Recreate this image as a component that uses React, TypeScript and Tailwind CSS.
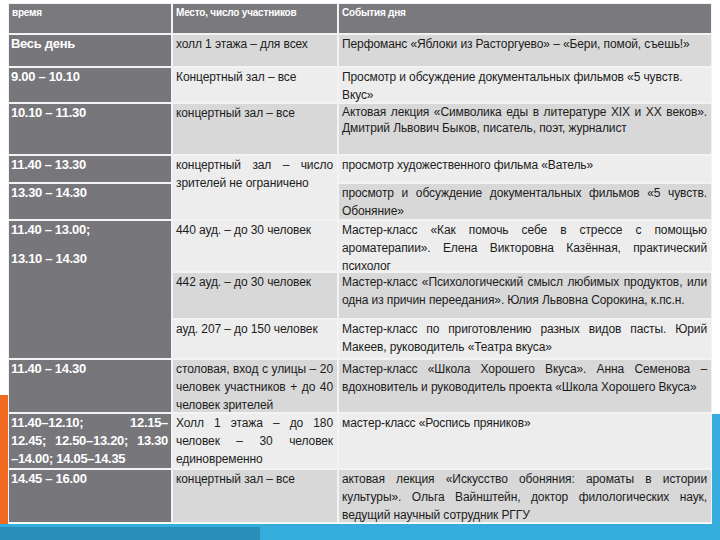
import React from "react";

type Ln = { t: string; j?: boolean };

const L = (t: string, j = false): Ln => ({ t, j });

function Lines({ lines, className = "" }: { lines: Ln[]; className?: string }) {
  return (
    <div className={className}>
      {lines.map((l, i) => (
        <div key={i} className={l.j ? "whitespace-nowrap [text-align-last:justify]" : "whitespace-nowrap"}>
          {l.t}
        </div>
      ))}
    </div>
  );
}

const timeCell = "bg-[#77767b] text-white font-bold text-[13px] leading-[18px] pl-[2px] tracking-[-0.3px]";
const light = "bg-[#ededed] text-[#1c1c1c] text-[12px] leading-[18px] px-[3px] tracking-[-0.1px]";
const dark = "bg-[#d8d8d8] text-[#1c1c1c] text-[12px] leading-[18px] px-[3px] tracking-[-0.1px]";
const head = "bg-[#7a797d] text-white font-bold text-[10px] leading-[18px] px-[3px] tracking-[-0.2px]";

export default function App() {
  return (
    <div className="relative w-[720px] h-[540px] bg-white overflow-hidden font-['Liberation_Sans',sans-serif]">
      {/* slide decorations */}
      <div className="absolute left-0 top-[395px] w-[8px] h-[134px] bg-[#f26a21]" />
      <div className="absolute left-[712px] top-[414px] w-[8px] h-[126px] bg-[#34acdc]" />
      <div className="absolute left-0 top-[524px] w-[720px] h-[16px] bg-[#34acdc]" />
      <div className="absolute left-0 top-[527px] w-[260px] h-[13px] bg-[#2a8fb8]" />

      <div className="relative ml-[8px] mt-[3px] w-[704px] p-[1px] bg-[#f3f3f3]">
        <div className="grid grid-cols-[162px_164px_372px] grid-rows-[29px_31px_34px_50px_26px_35px_50px_45px_38px_52px_54px_52px] gap-[2px]">
          <div className={head}>время</div>
          <div className={head}>Место, число участников</div>
          <div className={head}>События дня</div>

          <div className={timeCell}>Весь день</div>
          <div className={dark}>холл 1 этажа – для всех</div>
          <div className={dark}>
            <Lines lines={[L("Перфоманс «Яблоки из Расторгуево» – «Бери, помой, съешь!»")]} />
          </div>

          <div className={timeCell}>9.00 – 10.10</div>
          <div className={light}>Концертный зал – все</div>
          <div className={light}>
            <Lines lines={[L("Просмотр и обсуждение документальных фильмов «5 чувств."), L("Вкус»")]} />
          </div>

          <div className={timeCell}>10.10 – 11.30</div>
          <div className={dark}>концертный зал – все</div>
          <div className={dark + " pr-[4px]"}>
            <Lines
              className="leading-[16px]"
              lines={[L("Актовая лекция «Символика еды в литературе XIX и XX веков».", true), L("Дмитрий Львович Быков, писатель, поэт, журналист")]}
            />
          </div>

          <div className={timeCell}>11.40 – 13.30</div>
          <div className={light + " row-span-2 pr-[4px]"}>
            <Lines lines={[L("концертный зал – число", true), L("зрителей не ограничено")]} />
          </div>
          <div className={light}>просмотр художественного фильма «Ватель»</div>

          <div className={timeCell}>13.30 – 14.30</div>
          <div className={dark + " pr-[4px]"}>
            <Lines lines={[L("просмотр и обсуждение документальных фильмов «5 чувств.", true), L("Обоняние»")]} />
          </div>

          <div className={timeCell + " row-span-3"}>
            <div>11.40 – 13.00;</div>
            <div className="mt-[11px]">13.10 – 14.30</div>
          </div>
          <div className={light}>440 ауд. – до 30 человек</div>
          <div className={light + " pr-[4px]"}>
            <Lines
              lines={[
                L("Мастер-класс «Как помочь себе в стрессе с помощью", true),
                L("ароматерапии». Елена Викторовна Казённая, практический", true),
                L("психолог"),
              ]}
            />
          </div>

          <div className={dark}>442 ауд. – до 30 человек</div>
          <div className={dark + " pr-[4px]"}>
            <Lines
              lines={[
                L("Мастер-класс «Психологический смысл любимых продуктов, или", true),
                L("одна из причин переедания». Юлия Львовна Сорокина, к.пс.н."),
              ]}
            />
          </div>

          <div className={light}>ауд. 207 – до 150 человек</div>
          <div className={light + " pr-[4px]"}>
            <Lines
              lines={[L("Мастер-класс по приготовлению разных видов пасты. Юрий", true), L("Макеев, руководитель «Театра вкуса»")]}
            />
          </div>

          <div className={timeCell}>11.40 – 14.30</div>
          <div className={dark + " pr-[4px]"}>
            <Lines
              lines={[L("столовая, вход с улицы – 20", true), L("человек участников + до 40", true), L("человек зрителей")]}
            />
          </div>
          <div className={dark + " pr-[4px]"}>
            <Lines
              lines={[
                L("Мастер-класс «Школа Хорошего Вкуса». Анна Семенова –", true),
                L("вдохновитель и руководитель проекта «Школа Хорошего Вкуса»"),
              ]}
            />
          </div>

          <div className={timeCell + " pr-[3px]"}>
            <Lines lines={[L("11.40–12.10; 12.15–", true), L("12.45; 12.50–13.20; 13.30", true), L("–14.00; 14.05–14.35")]} />
          </div>
          <div className={light + " pr-[4px]"}>
            <Lines lines={[L("Холл 1 этажа – до 180", true), L("человек – 30 человек", true), L("единовременно")]} />
          </div>
          <div className={light}>мастер-класс «Роспись пряников»</div>

          <div className={timeCell}>14.45 – 16.00</div>
          <div className={dark}>концертный зал – все</div>
          <div className={dark + " pr-[4px]"}>
            <Lines
              lines={[
                L("актовая лекция «Искусство обоняния: ароматы в истории", true),
                L("культуры». Ольга Вайнштейн, доктор филологических наук,", true),
                L("ведущий научный сотрудник РГГУ"),
              ]}
            />
          </div>
        </div>
      </div>
    </div>
  );
}
